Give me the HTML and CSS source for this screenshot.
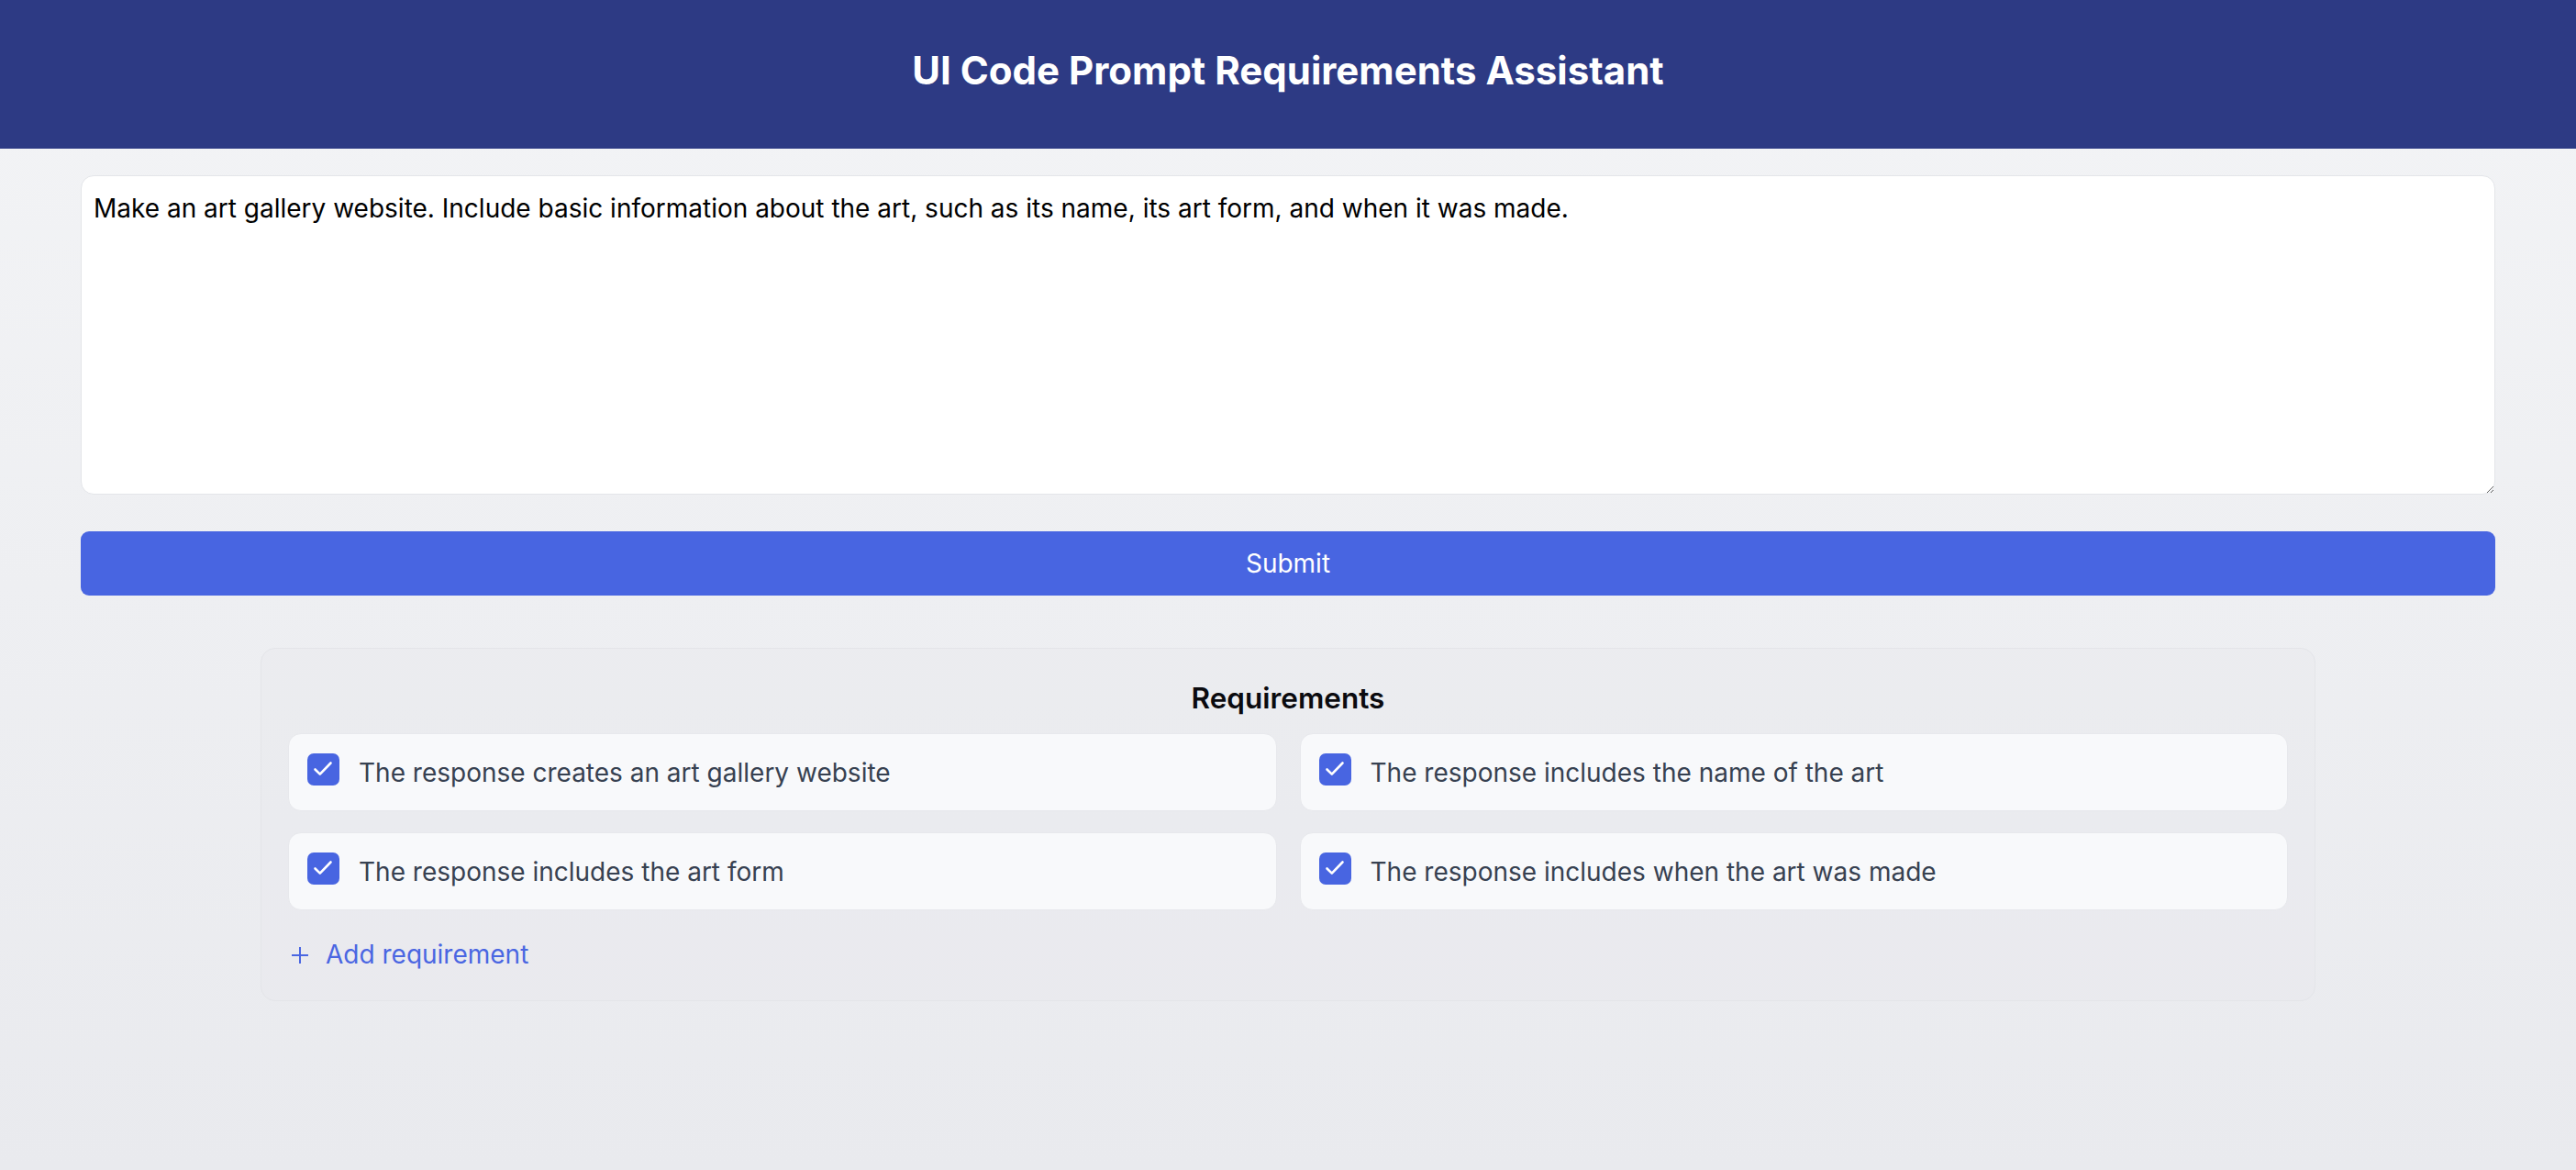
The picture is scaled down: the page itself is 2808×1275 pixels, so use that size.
FILE: index.html
```html
<!DOCTYPE html>
<html lang="en">
<head>
<meta charset="utf-8">
<title>UI Code Prompt Requirements Assistant</title>
<link rel="stylesheet" href="styles.css">
</head>
<body>
<header class="app-header">
  <h1 class="app-title">UI Code Prompt Requirements Assistant</h1>
</header>
<main class="main">
  <textarea class="prompt-input">Make an art gallery website. Include basic information about the art, such as its name, its art form, and when it was made.</textarea>
  <button class="submit-btn" type="button">Submit</button>
  <section class="req-card">
    <h2 class="req-title">Requirements</h2>
    <div class="req-grid">
      <div class="req-item">
        <span class="req-check"><svg viewBox="0 0 35 35" width="35" height="35"><polyline points="8.5,17.5 13.8,22.6 25.5,10.5" fill="none" stroke="#fff" stroke-width="2.6" stroke-linecap="round" stroke-linejoin="round"/></svg></span>
        <span class="req-text">The response creates an art gallery website</span>
      </div>
      <div class="req-item">
        <span class="req-check"><svg viewBox="0 0 35 35" width="35" height="35"><polyline points="8.5,17.5 13.8,22.6 25.5,10.5" fill="none" stroke="#fff" stroke-width="2.6" stroke-linecap="round" stroke-linejoin="round"/></svg></span>
        <span class="req-text">The response includes the name of the art</span>
      </div>
      <div class="req-item">
        <span class="req-check"><svg viewBox="0 0 35 35" width="35" height="35"><polyline points="8.5,17.5 13.8,22.6 25.5,10.5" fill="none" stroke="#fff" stroke-width="2.6" stroke-linecap="round" stroke-linejoin="round"/></svg></span>
        <span class="req-text">The response includes the art form</span>
      </div>
      <div class="req-item">
        <span class="req-check"><svg viewBox="0 0 35 35" width="35" height="35"><polyline points="8.5,17.5 13.8,22.6 25.5,10.5" fill="none" stroke="#fff" stroke-width="2.6" stroke-linecap="round" stroke-linejoin="round"/></svg></span>
        <span class="req-text">The response includes when the art was made</span>
      </div>
    </div>
    <button class="add-btn" type="button">
      <svg class="add-icon" viewBox="0 0 20 20" width="20" height="20"><path d="M10 1v18M1 10h18" stroke="#4a66e2" stroke-width="2" fill="none"/></svg>
      <span>Add requirement</span>
    </button>
  </section>
</main>
</body>
</html>
```
FILE: styles.css
```css
* { box-sizing: border-box; }
html, body { margin: 0; padding: 0; }
body {
  min-height: 1275px;
  background: linear-gradient(180deg, #f3f4f6 0%, #e9eaee 100%);
  font-family: Inter, "Noto Sans", "Liberation Sans", sans-serif;
  color: #111827;
}
.app-header {
  height: 162px;
  padding-bottom: 8px;
  background: #2d3a84;
  display: flex;
  align-items: center;
  justify-content: center;
}
.app-title {
  margin: 0;
  color: #ffffff;
  font-size: 42px;
  font-weight: 700;
  line-height: 58px;
}
.main {
  padding: 29px 88px 0;
  display: flex;
  flex-direction: column;
}
.prompt-input {
  display: block;
  width: 100%;
  height: 348px;
  padding: 14px 13px;
  background: #ffffff;
  border: 1px solid #e3e5e9;
  border-radius: 14px;
  font-family: Inter, "Noto Sans", "Liberation Sans", sans-serif;
  font-size: 28px;
  line-height: 1.5;
  color: #000000;
  resize: vertical;
  outline: none;
}
.submit-btn {
  margin-top: 40px;
  height: 70px;
  width: 100%;
  background: #4865e1;
  color: #ffffff;
  border: none;
  border-radius: 9px;
  font-family: Inter, "Noto Sans", "Liberation Sans", sans-serif;
  font-size: 28px;
  font-weight: 400;
}
.req-card {
  margin: 57px auto 0;
  width: 2240px;
  padding: 29px 29px 28px;
  background: rgba(232, 233, 238, 0.4);
  border: 1px solid #e4e5e9;
  border-radius: 16px;
}
.req-title {
  margin: 0 0 13px;
  text-align: center;
  font-size: 31.5px;
  line-height: 50px;
  font-weight: 600;
  color: #0b0b0f;
}
.req-grid {
  display: grid;
  grid-template-columns: 1fr 1fr;
  column-gap: 25px;
  row-gap: 23px;
}
.req-item {
  display: flex;
  align-items: center;
  gap: 21px;
  height: 85px;
  padding: 0 20px;
  background: #f8f9fb;
  border: 1px solid #e7e8ec;
  border-radius: 14px;
}
.req-check {
  flex: none;
  width: 35px;
  height: 35px;
  margin-top: -6px;
  border-radius: 7px;
  background: #4865e1;
  display: flex;
}
.req-text {
  font-size: 28px;
  line-height: 42px;
  color: #374151;
}
.add-btn {
  margin-top: 27px;
  display: flex;
  align-items: center;
  gap: 18px;
  padding: 0 0 0 3px;
  background: none;
  border: none;
  color: #4a66e2;
  font-family: Inter, "Noto Sans", "Liberation Sans", sans-serif;
  font-size: 28px;
  line-height: 43px;
}
.add-icon { flex: none; }
```
